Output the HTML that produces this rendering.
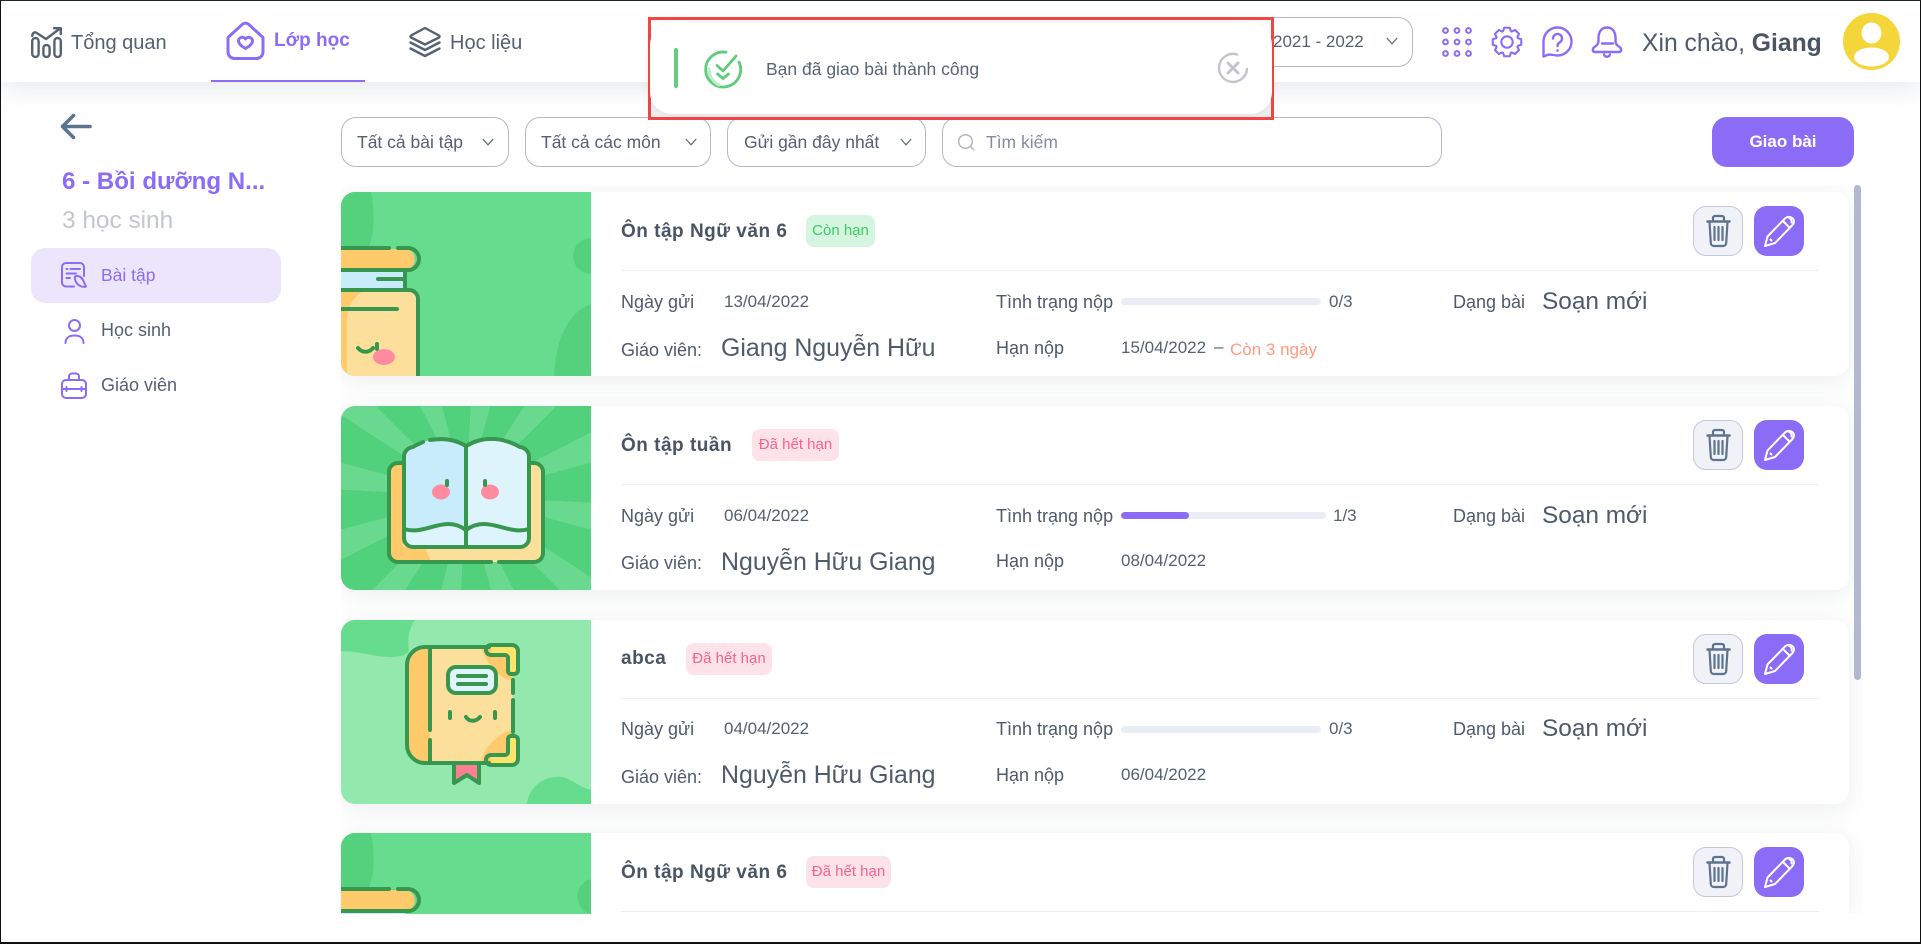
<!DOCTYPE html>
<html lang="vi">
<head>
<meta charset="utf-8">
<title>Bài tập</title>
<style>
*{box-sizing:border-box}
html,body{margin:0;padding:0;background:#fff}
body{width:1921px;height:944px;position:relative;overflow:hidden;font-family:"Liberation Sans",sans-serif;color:#4f5a6b}
.t{position:absolute;white-space:nowrap;line-height:24px;height:24px}
.abs{position:absolute;display:block}
#frame{position:absolute;inset:0;border:1px solid #111;border-bottom-width:2px;border-top-color:#1c2a20;z-index:50;pointer-events:none}
#hdr{position:absolute;left:0;top:0;width:1921px;height:82px;background:#fff;box-shadow:0 4px 26px rgba(90,105,125,.17);z-index:5}
.sel{position:absolute;border:1px solid #b6b7cf;border-radius:15px;background:#fff;height:50px}
.sel .t{top:12px;font-size:17.5px;color:#566070}
.chev{position:absolute}
#list{position:absolute;left:341px;top:185px;width:1522px;height:729px;overflow:hidden}
.card{position:absolute;left:0;width:1508px;height:184px;background:#fff;border-radius:14px;box-shadow:0 4px 24px rgba(90,105,125,.12)}
.img{position:absolute;left:0;top:0;width:250px;height:184px;border-radius:14px 0 0 14px;overflow:hidden}
.ti{left:280px;top:28px;font-size:19px;font-weight:bold;letter-spacing:.5px;color:#4a5464}
.badge{position:absolute;top:23px;height:32px;border-radius:8px;font-size:15px;line-height:32px;text-align:center}
.ok{background:#d6f5e0;color:#3dcb64}
.no{background:#fde2ea;color:#f5648c}
.hr{position:absolute;left:280px;top:78px;width:1198px;height:1px;background:#eceef1}
.l{font-size:18px;color:#4f5a6b}
.d{font-size:17px;color:#566070}
.big1{font-size:24.9px;color:#4f5a6b;top:144px;left:380px}
.big2{font-size:24.4px;color:#4f5a6b;top:98px;left:1201px}
.bar{position:absolute;top:106px;left:780px;height:7px;background:#eaedf5;border-radius:4px;overflow:hidden}
.bar i{display:block;height:7px;background:#8b6cf6;border-radius:4px}
.btn{position:absolute;top:14px;width:50px;height:50px;border-radius:13px}
.del{left:1352px;background:#f0f2f8;border:1.5px solid #c5c7dc}
.edit{left:1413px;background:#8b6cf6}
</style>
</head>
<body>

<svg width="0" height="0" style="position:absolute">
<defs>
<symbol id="art1" viewBox="0 0 250 184">
<rect width="250" height="184" fill="#66dd8e"/>
<path d="M0 0H30C34 20 34 40 27 58H0Z" fill="#55d17e"/>
<circle cx="250" cy="64" r="18" fill="#55d17e"/>
<path d="M213 184C215 140 232 118 250 112V184Z" fill="#55d17e"/>
<path d="M0 57H66a11 11 0 0 1 0 21H0Z" fill="#ffca6c"/>
<rect x="0" y="78" width="64" height="20" fill="#c9ecfd"/>
<path d="M0 98H70a7 7 0 0 1 7 7V184H0Z" fill="#fddf9c"/>
<path d="M0 98H24C12 104 6 116 6 130V184H0Z" fill="#ffca6c"/>
<g fill="none" stroke="#37974f" stroke-width="4" stroke-linecap="round">
<path d="M0 56H48M57 56H67a11 11 0 0 1 0 22H0"/>
<path d="M64 78V98M37 87H63"/>
<path d="M0 98H68a9 9 0 0 1 9 9V184"/>
<path d="M0 117H56"/>
<path d="M17 156c4 5 11 5 15 0"/>
<path d="M36 152v5"/>
</g>
<ellipse cx="43" cy="165" rx="11" ry="8" fill="#ff8c9e"/>
</symbol>
<symbol id="art1top" viewBox="0 0 250 81">
<rect width="250" height="81" fill="#66dd8e"/>
<path d="M0 0H30C34 20 34 40 27 58H0Z" fill="#55d17e"/>
<path d="M250 46A18 18 0 0 0 250 81Z" fill="#55d17e"/>
<path d="M0 57H66a11 11 0 0 1 0 21H0Z" fill="#ffca6c"/>
<rect x="0" y="78" width="64" height="3" fill="#c9ecfd"/>
<g fill="none" stroke="#37974f" stroke-width="4" stroke-linecap="round">
<path d="M0 56H48M57 56H67a11 11 0 0 1 0 22H0"/>
</g>
</symbol>
<symbol id="art2" viewBox="0 0 250 184">
<path d="M62 57H56a9 9 0 0 0-9 9V147a9 9 0 0 0 9 9H193a9 9 0 0 0 9-9V66a9 9 0 0 0-9-9H188Z" fill="#fddf9c"/>
<path d="M62 57H56a9 9 0 0 0-9 9V147a9 9 0 0 0 9 9H90L84 141H62Z" fill="#ffca6c"/>
<path d="M125 40C105 28 85 33 72 41a10 10 0 0 0-9 9V132a9 9 0 0 0 9 9H125Z" fill="#c9ecfd"/>
<path d="M125 40C145 28 165 33 179 41a10 10 0 0 1 9 9V132a9 9 0 0 1-9 9H125Z" fill="#def4fd"/>
<path d="M62 124C85 130 103 108 125 124C147 108 166 130 188 124V132a9 9 0 0 1-9 9H71a9 9 0 0 1-9-9Z" fill="#def4fd"/>
<g fill="none" stroke="#37974f" stroke-width="4" stroke-linecap="round" stroke-linejoin="round">
<path d="M62 57H57a9 9 0 0 0-9 9V147a9 9 0 0 0 9 9H150M158 156H193a9 9 0 0 0 9-9V66a9 9 0 0 0-9-9H189"/>
<path d="M82 36C78 38 75 39 72 41a10 10 0 0 0-9 9V132a9 9 0 0 0 9 9H179a9 9 0 0 0 9-9V50a10 10 0 0 0-9-9C165 33 145 28 125 40C113 33 102 32 89 34"/>
<path d="M125 40V141"/>
<path d="M63 123C85 130 103 108 125 124C147 108 166 130 188 123"/>
</g>
<ellipse cx="100" cy="86" rx="9" ry="7.5" fill="#ff8c9e"/>
<ellipse cx="149" cy="86" rx="9" ry="7.5" fill="#ff8c9e"/>
<path d="M106 75v4M144 75v4" stroke="#37974f" stroke-width="4" stroke-linecap="round"/>
</symbol>
<symbol id="art3" viewBox="0 0 250 184">
<rect width="250" height="184" fill="#93e8ae"/>
<path d="M0 0H74C68 8 66 20 68 30C66 38 48 38 36 36C22 33 10 31 0 31Z" fill="#66dd8e"/>
<path d="M186 184C188 165 205 155 222 157C232 160 240 168 250 170V184Z" fill="#66dd8e"/>
<path d="M113 143H138V163L126 155L113 163Z" fill="#ff7f92" stroke="#37974f" stroke-width="4" stroke-linejoin="round"/>
<path d="M89 27H172V143H89Z" fill="#fddf9c"/>
<path d="M89 27H84a18 18 0 0 0-18 18V125a18 18 0 0 0 18 18H89Z" fill="#ffca6c"/>
<path d="M140 27H172V60C160 60 146 45 140 27ZM140 143C142 128 158 112 172 110V143Z" fill="#ffca6c"/>
<path d="M150 27H176V52H169V36Q169 35 168 35H150ZM150 143H176V118H169V134Q169 135 168 135H150Z" fill="#fae46c"/>
<g fill="none" stroke="#37974f" stroke-width="4" stroke-linecap="round" stroke-linejoin="round">
<path d="M148 27H84a18 18 0 0 0-18 18V125a18 18 0 0 0 18 18H148"/>
<path d="M89 27V110M89 120V143"/>
<path d="M172 60V73M172 80V112"/>
<path d="M150 25H171a6 6 0 0 1 6 6V50a4 4 0 0 1-4 4H170a3 3 0 0 1-3-3V38a3 3 0 0 0-3-3H150a5 5 0 0 1 0-10Z"/>
<path d="M150 145H171a6 6 0 0 0 6-6V120a4 4 0 0 0-4-4H170a3 3 0 0 0-3 3V132a3 3 0 0 1-3 3H150a5 5 0 0 0 0 10Z"/>
<path d="M109 92v6M154 92v6"/>
<path d="M125 97c3 5 10 5 14 0"/>
</g>
<rect x="107" y="47" width="48" height="26" rx="8" fill="#dff4fd" stroke="#37974f" stroke-width="4"/>
<path d="M117 56H145M117 64H145" stroke="#37974f" stroke-width="4" stroke-linecap="round"/>
</symbol>
<symbol id="trash" viewBox="0 0 50 50">
<g fill="none" stroke="#5e7390" stroke-width="2.2" stroke-linecap="round" stroke-linejoin="round">
<path d="M20 14.500v-2.500a2 2 0 0 1 2-2h7a2 2 0 0 1 2 2v2.500"/>
<path d="M14.500 15.500H36.500" stroke-width="2.500"/>
<path d="M16.500 16l1.300 21a3 3 0 0 0 3 3h9.400a3 3 0 0 0 3-3l1.300-21"/>
<path d="M21.500 21V34M25.500 21V34M29.500 21V34"/>
</g>
</symbol>
<symbol id="pen" viewBox="0 0 50 50">
<g fill="none" stroke="#fff" stroke-width="2" stroke-linecap="round" stroke-linejoin="round">
<path d="M11 40L13.500 30.500L31 12.500C33.500 10 38 10.500 39.500 13.500C40.500 16 39.500 18 38 19.500L21 37Z"/>
<path d="M29 15L35.500 21.500"/>
<path d="M34.500 11.500C37 12.500 38 14.500 37.500 16.500"/>
<path d="M16.500 33.500L17.500 34.500"/>
</g>
</symbol>
</defs>
</svg>

<!-- HEADER -->
<div id="hdr">
  <svg class="abs" style="left:31px;top:27px" width="31" height="31" viewBox="0 0 31 31" fill="none" stroke="#566273" stroke-width="2.400" stroke-linecap="round" stroke-linejoin="round">
    <rect x="1.200" y="11" width="6.400" height="19" rx="3.200"/>
    <rect x="12.400" y="18" width="6.200" height="12" rx="3.100"/>
    <rect x="23.400" y="11" width="6.400" height="19" rx="3.200"/>
    <path d="M1.200 9C1.500 6 3 5 5 5.500L15 12L29 1.500"/>
    <path d="M23 1.200H29.800V7"/>
  </svg>
  <span class="t" style="left:71px;top:31px;font-size:20px;color:#566070">Tổng quan</span>

  <svg class="abs" style="left:226px;top:21px" width="39" height="39" viewBox="0 0 39 39" fill="none" stroke="#8b6cf6" stroke-width="3" stroke-linecap="round" stroke-linejoin="round">
    <path d="M2 16.500L16.500 3.200Q19.500 1 22.500 3.200L37 16.500V31a6.500 6.500 0 0 1-6.500 6.500H8.500A6.500 6.500 0 0 1 2 31Z"/>
    <path d="M19.500 27.500C15 25 12.500 22.500 12.500 20a3.800 3.800 0 0 1 7-2a3.800 3.800 0 0 1 7 2C26.500 22.500 24 25 19.500 27.500Z"/>
  </svg>
  <span class="t" style="left:274px;top:29px;font-size:19px;font-weight:bold;color:#8b6cf6">Lớp học</span>
  <div class="abs" style="left:211px;top:80px;width:154px;height:2px;background:#8b6cf6"></div>

  <svg class="abs" style="left:409px;top:26px" width="32" height="32" viewBox="0 0 32 32" fill="none" stroke="#566273" stroke-width="2.400" stroke-linecap="round" stroke-linejoin="round">
    <path d="M16 2L30 9.500Q31 10.500 30 11.500L16 18.500L2 11.500Q1 10.500 2 9.500Z"/>
    <path d="M1.500 16.500L16 24L30.500 16.500"/>
    <path d="M1.500 22.500L16 30L30.500 22.500"/>
  </svg>
  <span class="t" style="left:450px;top:31px;font-size:20px;color:#566070">Học liệu</span>

  <!-- year selector -->
  <div class="sel" style="left:1186px;top:17px;width:227px"></div>
  <span class="t" style="left:1273px;top:30px;font-size:17px;color:#566070">2021 - 2022</span>
  <svg class="chev" style="left:1386px;top:37px" width="12" height="8" viewBox="0 0 12 8" fill="none" stroke="#5e6878" stroke-width="1.200"><path d="M.8 1L6 6.800L11.200 1"/></svg>

  <!-- right icons -->
  <svg class="abs" style="left:1442px;top:26px" width="32" height="32" viewBox="0 0 32 32" fill="none" stroke="#8b6cf6" stroke-width="2">
    <circle cx="3.500" cy="4.500" r="2.400"/><circle cx="15" cy="4.500" r="2.400"/><circle cx="26.500" cy="4.500" r="2.400"/>
    <circle cx="3.500" cy="16" r="2.400"/><circle cx="15" cy="16" r="2.400"/><circle cx="26.500" cy="16" r="2.400"/>
    <circle cx="3.500" cy="27.500" r="2.400"/><circle cx="15" cy="27.500" r="2.400"/><circle cx="26.500" cy="27.500" r="2.400"/>
  </svg>
  <svg class="abs" style="left:1491px;top:26px" width="32" height="32" viewBox="0 0 32 32" fill="none" stroke="#8b6cf6" stroke-width="2.100" stroke-linejoin="round">
    <circle cx="16" cy="16" r="5.700"/>
    <path d="M12.070 5.190L13.230 1.760H18.770L19.930 5.190L20.860 5.580L24.110 3.980L28.020 7.890L26.420 11.140L26.810 12.070L30.240 13.230V18.770L26.810 19.930L26.420 20.860L28.020 24.110L24.110 28.020L20.860 26.420L19.930 26.810L18.770 30.240H13.230L12.070 26.810L11.140 26.420L7.890 28.020L3.980 24.110L5.580 20.860L5.190 19.930L1.760 18.770V13.230L5.190 12.070L5.580 11.140L3.980 7.890L7.890 3.980L11.140 5.580Z"/>
  </svg>
  <svg class="abs" style="left:1541px;top:26px" width="32" height="33" viewBox="0 0 32 33" fill="none" stroke="#8b6cf6" stroke-width="2.400" stroke-linecap="round" stroke-linejoin="round">
    <path d="M16.500 1.500A14 14 0 0 1 16.500 29.500C13 29.500 10 28 7 28.800L2.500 30.500V15.500A14 14 0 0 1 16.500 1.500Z"/>
    <path d="M12 12.500a4.500 4.500 0 1 1 7 3.700c-1.600 1-2.500 2-2.500 3.800"/>
    <path d="M16.500 24.300v.4"/>
  </svg>
  <svg class="abs" style="left:1591px;top:26px" width="32" height="33" viewBox="0 0 32 33" fill="none" stroke="#8b6cf6" stroke-width="2.400" stroke-linecap="round" stroke-linejoin="round">
    <path d="M16 1.500C9 1.500 7.500 8 7.500 12V15C7.500 18 6 19.500 3.500 21C1 22.500 1.500 26 4 26H28C30.500 26 31 22.500 28.500 21C26 19.500 24.500 18 24.500 15V12C24.500 8 23 1.500 16 1.500Z"/>
    <path d="M11 17.500H22"/>
    <path d="M13 28.500C13.500 31.500 18.500 31.500 19 28.500"/>
  </svg>
  <span class="t" style="left:1642px;top:32px;font-size:24.700px;color:#4f5a6b">Xin chào, <b style="color:#4a5464">Giang</b></span>

  <svg class="abs" style="left:1843px;top:13px" width="57" height="57" viewBox="0 0 57 57">
    <defs><clipPath id="av"><circle cx="28.500" cy="28.500" r="28.500"/></clipPath></defs>
    <circle cx="28.500" cy="28.500" r="28.500" fill="#f4d63a"/>
    <g clip-path="url(#av)" fill="#fff">
      <ellipse cx="28.500" cy="20" rx="10" ry="10.500"/>
      <ellipse cx="28.500" cy="44" rx="17.500" ry="9.500"/>
    </g>
  </svg>
</div>

<!-- SIDEBAR -->
<svg class="abs" style="left:60px;top:113px" width="32" height="27" viewBox="0 0 32 27" fill="none" stroke="#5e7390" stroke-width="3.600" stroke-linecap="round" stroke-linejoin="round">
  <path d="M13.500 2.500L2.500 13.500L13.500 24.500"/><path d="M3 13.500H30"/>
</svg>
<span class="t" style="left:62px;top:170px;font-size:24.100px;font-weight:bold;color:#8b6cf6">6 - Bồi dưỡng N...</span>
<span class="t" style="left:62px;top:209px;font-size:24.400px;color:#c3c5d1">3 học sinh</span>

<div class="abs" style="left:31px;top:248px;width:250px;height:55px;background:#ebe6fc;border-radius:14px"></div>
<svg class="abs" style="left:61px;top:262px" width="26" height="27" viewBox="0 0 26 27" fill="none" stroke="#8b6cf6" stroke-width="2" stroke-linecap="round" stroke-linejoin="round">
  <path d="M13 24.500H5a4 4 0 0 1-4-4V5a4 4 0 0 1 4-4H19a4 4 0 0 1 4 4V14"/>
  <path d="M5.500 7H6.500M9.500 7H19M5.500 11.500H15M5.500 16H9"/>
  <path d="M14 14.500C17 13 20.500 15 22 18L25 24.500C22 25.500 18 24 16 21.500C14.500 19.500 13.500 17 14 14.500Z"/>
</svg>
<span class="t" style="left:101px;top:263px;font-size:17.500px;color:#8b6cf6">Bài tập</span>
<svg class="abs" style="left:64px;top:317px" width="21" height="27" viewBox="0 0 21 27" fill="none" stroke="#8b6cf6" stroke-width="2" stroke-linecap="round">
  <circle cx="10.500" cy="8.500" r="5.500"/>
  <path d="M1.500 26C1.500 21 5 18.500 10.500 18.500C16 18.500 19.500 21 19.500 26"/>
</svg>
<span class="t" style="left:101px;top:318px;font-size:18px;color:#566070">Học sinh</span>
<svg class="abs" style="left:61px;top:372px" width="26" height="27" viewBox="0 0 26 27" fill="none" stroke="#8b6cf6" stroke-width="2" stroke-linecap="round" stroke-linejoin="round">
  <rect x="1" y="8" width="24" height="18" rx="4"/>
  <path d="M8 7.500V4.500a3 3 0 0 1 3-3h4a3 3 0 0 1 3 3v3"/>
  <path d="M1.500 17H4.500M7 17H19M21.500 17H24.500"/>
  <path d="M5.500 15V19M20.500 15V19"/>
</svg>
<span class="t" style="left:101px;top:373px;font-size:18px;color:#566070">Giáo viên</span>

<!-- FILTERS -->
<div class="sel" style="left:341px;top:117px;width:168px"><span class="t" style="left:15px">Tất cả bài tập</span>
  <svg class="chev" style="left:140px;top:20px" width="12" height="8" viewBox="0 0 12 8" fill="none" stroke="#5e6878" stroke-width="1.200"><path d="M.8 1L6 6.800L11.200 1"/></svg></div>
<div class="sel" style="left:525px;top:117px;width:186px"><span class="t" style="left:15px">Tất cả các môn</span>
  <svg class="chev" style="left:159px;top:20px" width="12" height="8" viewBox="0 0 12 8" fill="none" stroke="#5e6878" stroke-width="1.200"><path d="M.8 1L6 6.800L11.200 1"/></svg></div>
<div class="sel" style="left:727px;top:117px;width:199px"><span class="t" style="left:16px">Gửi gần đây nhất</span>
  <svg class="chev" style="left:172px;top:20px" width="12" height="8" viewBox="0 0 12 8" fill="none" stroke="#5e6878" stroke-width="1.200"><path d="M.8 1L6 6.800L11.200 1"/></svg></div>
<div class="sel" style="left:942px;top:117px;width:500px">
  <svg class="abs" style="left:14px;top:15px" width="19" height="19" viewBox="0 0 19 19" fill="none" stroke="#b4b8c4" stroke-width="1.500" stroke-linecap="round"><circle cx="8.500" cy="8.500" r="6.800"/><path d="M13.500 13.500L17 17"/></svg>
  <span class="t" style="left:43px;color:#858d9b">Tìm kiếm</span>
</div>
<div class="abs" style="left:1712px;top:117px;width:142px;height:50px;background:#8b6cf6;border-radius:15px;color:#fff;font-weight:bold;font-size:17px;line-height:50px;text-align:center">Giao bài</div>

<!-- LIST -->
<div id="list">
  <div class="card" style="top:7px">
    <div class="img"><svg width="250" height="184"><use href="#art1"/></svg></div>
    <span class="t ti">Ôn tập Ngữ văn 6</span>
    <div class="badge ok" style="left:465px;width:69px">Còn hạn</div>
    <div class="btn del"><svg style="position:absolute;left:-1.500px;top:-1.500px" width="50" height="50"><use href="#trash"/></svg></div>
    <div class="btn edit"><svg width="50" height="50"><use href="#pen"/></svg></div>
    <div class="hr"></div>
    <span class="t l" style="left:280px;top:98px">Ngày gửi</span>
    <span class="t d" style="left:383px;top:98px">13/04/2022</span>
    <span class="t l" style="left:655px;top:98px">Tình trạng nộp</span>
    <div class="bar" style="width:200px"></div>
    <span class="t d" style="left:988px;top:98px">0/3</span>
    <span class="t l" style="left:1112px;top:98px">Dạng bài</span>
    <span class="t big2">Soạn mới</span>
    <span class="t l" style="left:280px;top:146px">Giáo viên:</span>
    <span class="t big1">Giang Nguyễn Hữu</span>
    <span class="t l" style="left:655px;top:144px">Hạn nộp</span>
    <span class="t d" style="left:780px;top:144px">15/04/2022</span>
    <span class="t d" style="left:873px;top:143px">–</span>
    <span class="t" style="left:889px;top:146px;font-size:17px;color:#ff9a80">Còn 3 ngày</span>
  </div>

  <div class="card" style="top:221px">
    <div class="img" style="background:repeating-conic-gradient(from 3deg at 50% 49%,#69d98f 0 12deg,#52d17c 12deg 30deg)"><svg width="250" height="184"><use href="#art2"/></svg></div>
    <span class="t ti">Ôn tập tuần</span>
    <div class="badge no" style="left:411px;width:87px">Đã hết hạn</div>
    <div class="btn del"><svg style="position:absolute;left:-1.500px;top:-1.500px" width="50" height="50"><use href="#trash"/></svg></div>
    <div class="btn edit"><svg width="50" height="50"><use href="#pen"/></svg></div>
    <div class="hr"></div>
    <span class="t l" style="left:280px;top:98px">Ngày gửi</span>
    <span class="t d" style="left:383px;top:98px">06/04/2022</span>
    <span class="t l" style="left:655px;top:98px">Tình trạng nộp</span>
    <div class="bar" style="width:205px"><i style="width:68px"></i></div>
    <span class="t d" style="left:992px;top:98px">1/3</span>
    <span class="t l" style="left:1112px;top:98px">Dạng bài</span>
    <span class="t big2">Soạn mới</span>
    <span class="t l" style="left:280px;top:145px">Giáo viên:</span>
    <span class="t big1">Nguyễn Hữu Giang</span>
    <span class="t l" style="left:655px;top:143px">Hạn nộp</span>
    <span class="t d" style="left:780px;top:143px">08/04/2022</span>
  </div>

  <div class="card" style="top:435px">
    <div class="img"><svg width="250" height="184"><use href="#art3"/></svg></div>
    <span class="t ti" style="top:27px">abca</span>
    <div class="badge no" style="left:345px;width:86px">Đã hết hạn</div>
    <div class="btn del"><svg style="position:absolute;left:-1.500px;top:-1.500px" width="50" height="50"><use href="#trash"/></svg></div>
    <div class="btn edit"><svg width="50" height="50"><use href="#pen"/></svg></div>
    <div class="hr"></div>
    <span class="t l" style="left:280px;top:97px">Ngày gửi</span>
    <span class="t d" style="left:383px;top:97px">04/04/2022</span>
    <span class="t l" style="left:655px;top:97px">Tình trạng nộp</span>
    <div class="bar" style="width:200px"></div>
    <span class="t d" style="left:988px;top:97px">0/3</span>
    <span class="t l" style="left:1112px;top:97px">Dạng bài</span>
    <span class="t big2" style="top:97px">Soạn mới</span>
    <span class="t l" style="left:280px;top:145px">Giáo viên:</span>
    <span class="t big1" style="top:143px">Nguyễn Hữu Giang</span>
    <span class="t l" style="left:655px;top:143px">Hạn nộp</span>
    <span class="t d" style="left:780px;top:143px">06/04/2022</span>
  </div>

  <div class="card" style="top:648px;height:81px;border-radius:14px 14px 0 0">
    <div class="img" style="height:81px;border-radius:14px 0 0 0"><svg width="250" height="81"><use href="#art1top"/></svg></div>
    <span class="t ti">Ôn tập Ngữ văn 6</span>
    <div class="badge no" style="left:465px;width:85px">Đã hết hạn</div>
    <div class="btn del"><svg style="position:absolute;left:-1.500px;top:-1.500px" width="50" height="50"><use href="#trash"/></svg></div>
    <div class="btn edit"><svg width="50" height="50"><use href="#pen"/></svg></div>
    <div class="hr"></div>
  </div>

  <div class="abs" style="left:1513px;top:0;width:7px;height:495px;background:#b4b7d0;border-radius:4px"></div>
</div>

<!-- TOAST -->
<div class="abs" style="left:648px;top:17px;width:626px;height:103px;border:3px solid #f44444;z-index:10;background:linear-gradient(#fff 0,#fff 45%,#eef0f3 100%)">
  <div class="abs" style="left:-1px;top:3px;width:622px;height:91px;background:#fff;border-radius:22px;box-shadow:0 2px 10px rgba(90,105,125,.12)"></div>
</div>
<div class="abs" style="left:674px;top:48px;width:4px;height:40px;background:#66cc80;border-radius:2px;z-index:11"></div>
<svg class="abs" style="left:703px;top:49px;z-index:11" width="40" height="40" viewBox="0 0 40 40" fill="none" stroke="#5fcb7c" stroke-width="2.800" stroke-linecap="round" stroke-linejoin="round">
  <path d="M23 3.200A17.500 17.500 0 1 0 36 13"/>
  <path d="M5 20C5 27 9 33 15 36" stroke="#bfeccb" stroke-width="3" transform="translate(1 0)"/>
  <path d="M14 16.500L20 22L33 7"/>
  <path d="M14.500 25L20 29.500L25.500 25"/>
</svg>
<span class="t" style="left:766px;top:57px;font-size:17.500px;color:#5a6474;z-index:11">Bạn đã giao bài thành công</span>
<svg class="abs" style="left:1217px;top:52px;z-index:11" width="32" height="32" viewBox="0 0 32 32" fill="none" stroke="#c3c4ce" stroke-width="2.400" stroke-linecap="round">
  <path d="M20 2.500A14 14 0 1 0 30 17"/>
  <path d="M11 11L21 21M21 11L11 21" stroke-width="3"/>
</svg>

<div id="frame"></div>
</body>
</html>
